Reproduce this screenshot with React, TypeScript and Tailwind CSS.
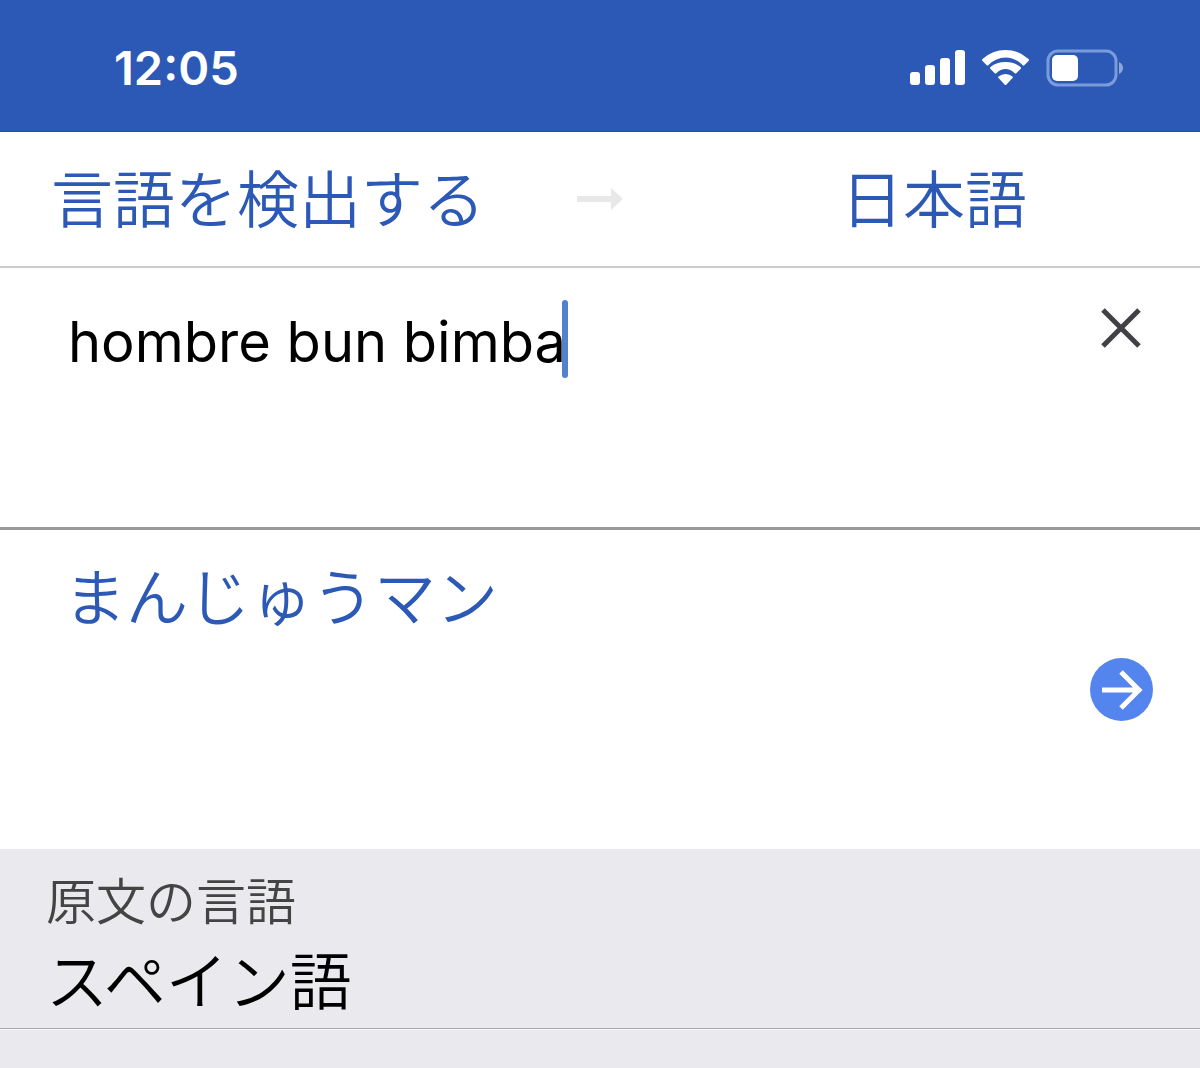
import { useState } from "react";

export default function App() {
  const [text, setText] = useState("hombre bun bimba");
  return (
    <main className="min-h-screen bg-[#e9e9ee] font-['Inter','Noto_Sans_CJK_JP',sans-serif] font-[350]">
      <header className="flex h-[132px] items-center justify-between border-b border-[#274f9f] bg-[#2c59b6] pt-1 pr-[76px] pl-[114px] text-white">
        <time className="text-[47px] leading-none font-semibold">12:05</time>
        <div className="flex items-center gap-4">
          <svg width="56" height="36" viewBox="0 0 56 36" fill="currentColor" aria-label="Signal">
            <rect x="0" y="22" width="10" height="13" rx="3" />
            <rect x="15" y="15" width="10" height="20" rx="3" />
            <rect x="30" y="8" width="10" height="27" rx="3" />
            <rect x="45" y="0" width="10" height="35" rx="3" />
          </svg>
          <svg width="48" height="36" viewBox="0 0 48 36" fill="currentColor" aria-label="Wi-Fi">
            <path d="M0.500 11Q-0.500 10 0.500 9Q10.500 0 23.500 0T46.500 9Q47.500 10 46.500 11L42.500 15Q41.500 16 40.500 15Q33 7.500 23.500 7.500T6.500 15Q5.500 16 4.500 15Z" />
            <path d="M8.500 19Q7.500 18 8.500 17Q14.500 12 23.500 12T38.500 17Q39.500 18 38.500 19L34.500 23Q33.500 24 32.500 23Q28.500 19 23.500 19T14.500 23Q13.500 24 12.500 23Z" />
            <path d="M16.500 28Q15.500 27 16.500 26.500Q19.500 24 23.500 24T30.500 26.500Q31.500 27 30.500 28L24.500 34.500Q23.500 35.500 22.500 34.500Z" />
          </svg>
          <svg width="78" height="38" viewBox="0 0 78 38" aria-label="Battery">
            <rect x="2" y="2" width="68" height="34" rx="10" fill="none" stroke="#7b9cdb" strokeWidth="3" />
            <rect x="6" y="6" width="26" height="26" rx="5" fill="white" />
            <path d="M73 13q4 2 4 6t-4 6z" fill="#8ea6d8" />
          </svg>
        </div>
      </header>
      <nav className="grid h-[136px] grid-cols-[577px_46px_1fr] items-center border-b-2 border-[#cccccc] bg-white text-[62px] leading-none text-[#2c59b6]">
        <button className="pt-1 pl-[51px] text-left">言語を検出する</button>
        <svg width="46" height="22" viewBox="0 0 46 22" fill="#e8e8e8" aria-hidden="true">
          <path d="M0 8h34V0l12 11-12 11v-8H0z" />
        </svg>
        <button className="pt-1 pl-[218px] text-left">日本語</button>
      </nav>
      <section className="flex h-[262px] items-start justify-between border-b-3 border-[#999999] bg-white pt-8 pr-[58px] pl-[68px]">
        <div className="flex min-w-0">
          <input aria-label="原文" value={text} onChange={(e) => setText(e.target.value)} className="field-sizing-content h-20 min-w-0 pt-1 text-[56px] font-normal text-black outline-none" />
          <span className="-ml-1 h-[78px] w-[6px] shrink-0 rounded-full bg-[#5580d0]" />
        </div>
        <button aria-label="クリア" onClick={() => setText("")} className="mt-2">
          <svg width="41" height="40" viewBox="0 0 41 40" stroke="#404144" strokeWidth="5"><path d="M2 2l36 36M38 2L2 38" /></svg>
        </button>
      </section>
      <section className="flex h-[319px] items-center justify-between bg-white pr-[47px] pl-16">
        <p className="self-start pt-[38px] text-[62px] leading-none text-[#2c59b6]">まんじゅうマン</p>
        <button aria-label="翻訳">
          <svg width="63" height="63" viewBox="0 0 63 63" fill="none" stroke="white" strokeWidth="5">
            <circle cx="31.500" cy="31.500" r="31.500" fill="#5484ed" stroke="none" /><path d="M12 32h37M31 14l18 18-18 18" />
          </svg>
        </button>
      </section>
      <section className="h-[180px] border-b border-[#aaaaae] px-[46px] pt-[26px]">
        <h2 className="text-[50px] leading-[54px] text-[#444444]">原文の言語</h2>
        <p className="mt-6 text-[62px] leading-[60px] text-black">スペイン語</p>
      </section>
      <div className="h-px bg-[#f7f7f9]" />
    </main>
  );
}
